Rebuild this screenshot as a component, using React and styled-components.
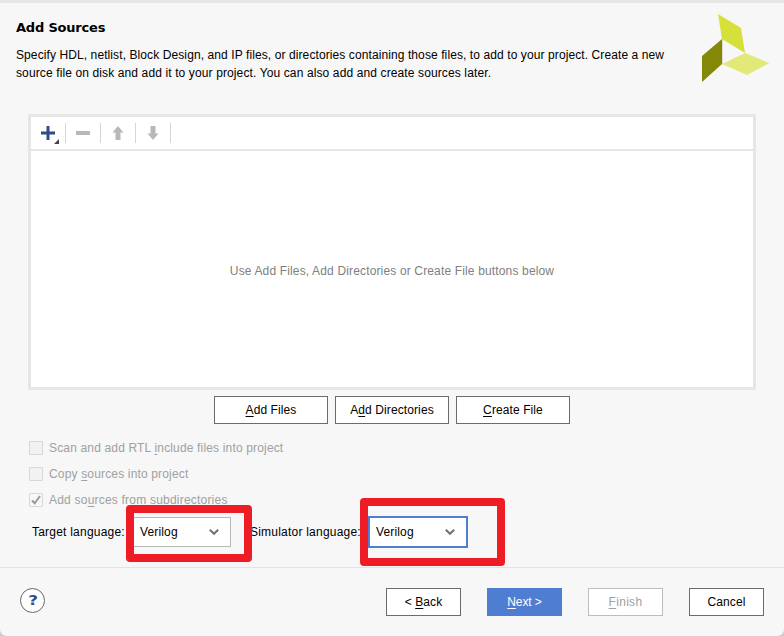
import React from "react";
import styled, { createGlobalStyle } from "styled-components";

const Global = createGlobalStyle`
  * { box-sizing: border-box; }
  body { margin: 0; background: #cfcfcf; overflow: hidden; }
`;

const Dialog = styled.main`
  display: flex;
  flex-direction: column;
  width: 784px;
  height: 636px;
  background: #f7f7f7;
  border-top: 3px solid #e6e6e6;
  border-radius: 0 0 7px 7px;
  color: #000;
  font: 12px/18px "Liberation Sans", Arial, sans-serif;
  letter-spacing: 0.12px;
  white-space: nowrap;
`;

const Header = styled.header`
  display: flex;
  justify-content: space-between;
  height: 111px;
  padding: 11px 14px 0 16px;
`;

const Title = styled.h1`
  margin: 5px 0 9px;
  font: bold 13px/18px "DejaVu Sans", sans-serif;
  letter-spacing: -0.2px;
`;

const Description = styled.p`
  margin: 0;
  letter-spacing: ${(p) => p.$spacing || "0.12px"};
`;

const Logo = styled.svg`
  display: block;
  width: 70px;
  height: 70px;
`;

const SourcePanel = styled.section`
  display: flex;
  flex-direction: column;
  width: 728px;
  height: 276px;
  margin-left: 28px;
  border: 3px solid #e6e6e6;
  background: #fff;
`;

const Toolbar = styled.div`
  display: flex;
  align-items: center;
  height: 34px;
  flex: none;
  border-bottom: 2px solid #e6e6e6;
`;

const ToolButton = styled.button`
  display: flex;
  width: 35px;
  height: 20px;
  padding: 0;
  border: 0;
  border-right: 1px solid #d6d6d6;
  background: transparent;

  svg { display: block; width: 34px; height: 20px; overflow: visible; }
`;

const EmptyMessage = styled.div`
  display: flex;
  flex: 1;
  align-items: center;
  justify-content: center;
  padding-top: 3px;
  color: #808080;
  letter-spacing: 0.15px;
`;

const SourceActions = styled.div`
  display: flex;
  justify-content: center;
  gap: 7px;
  margin-top: 6px;
`;

const Button = styled.button`
  width: ${(p) => p.$width || 75}px;
  height: 28px;
  padding: 0 0 1px;
  border: 1px solid ${(p) => (p.$primary ? "#4f7dd1" : p.disabled ? "#bdbdbd" : "#6b6b6b")};
  background: ${(p) => (p.$primary ? "#4f7dd1" : "#fff")};
  color: ${(p) => (p.$primary ? "#fff" : p.disabled ? "#a0a0a0" : "#000")};
  font: inherit;
  letter-spacing: ${(p) => p.$spacing || "0.1px"};
`;

const Key = styled.span`
  text-decoration: underline;
  text-decoration-thickness: 1px;
  text-underline-offset: 2px;
  text-decoration-skip-ink: none;
`;

const Options = styled.div`
  display: flex;
  flex-direction: column;
  gap: 8px;
  margin: 15px 0 0 29px;
`;

const Option = styled.label`
  display: flex;
  align-items: center;
  gap: 6px;
  height: 18px;
  color: #a0a0a0;
  letter-spacing: ${(p) => p.$spacing || "0.16px"};
`;

const CheckBox = styled.span`
  display: flex;
  width: 14px;
  height: 14px;
  border: 1px solid #d8d8d8;
  border-radius: 1px;
  background: ${(p) => (p.$checked ? "#f7f7f7" : "#f2f2f2")};

  svg { display: block; width: 12px; height: 12px; }
`;

const Languages = styled.div`
  position: relative;
  display: flex;
  align-items: center;
  height: 32px;
  margin-top: 7px;
  padding-left: 32px;
`;

const Label = styled.span`
  width: ${(p) => p.$width}px;
  letter-spacing: 0.22px;
`;

const Select = styled.div`
  display: flex;
  align-items: center;
  justify-content: space-between;
  width: 100px;
  height: ${(p) => (p.$focused ? 32 : 30)}px;
  margin-right: ${(p) => (p.$focused ? 0 : 19)}px;
  padding: 0 ${(p) => (p.$focused ? "11px 0 6px" : "11px 0 8px")};
  border: ${(p) => (p.$focused ? "2px solid #4f7dd1" : "1px solid #b8b8b8")};
  background: #fff;
  letter-spacing: 0.15px;

  svg { display: block; width: 10px; height: 6px; }
`;

const Highlight = styled.div`
  position: absolute;
  left: ${(p) => p.$left}px;
  top: ${(p) => p.$top}px;
  width: ${(p) => p.$width}px;
  height: ${(p) => p.$height}px;
  border: 8px solid #ee1c25;
  border-radius: 4px;
  pointer-events: none;
`;

const Footer = styled.footer`
  display: flex;
  justify-content: space-between;
  margin-top: 19px;
  padding: 20px 20px 0;
  border-top: 1px solid #e3e3e3;
`;

const Help = styled.button`
  width: 25px;
  height: 25px;
  padding: 0 0 0 1px;
  border: 1px solid #666;
  border-radius: 50%;
  background: #fff;
  color: #324c91;
  font: bold 14px/23px "DejaVu Sans", sans-serif;

  span { display: block; transform: scaleX(1.2); }
`;

const WizardButtons = styled.div`
  display: flex;
  gap: 26px;
`;

const Chevron = () => (
  <svg viewBox="0 0 10 6"><path d="M.8 .8 5 4.8 9.2 .8" fill="none" stroke="#707070" strokeWidth="2" /></svg>
);

export default function App() {
  return (
    <Dialog>
      <Global />
      <Header>
        <div>
          <Title>Add Sources</Title>
          <Description $spacing="0.096px">Specify HDL, netlist, Block Design, and IP files, or directories containing those files, to add to your project. Create a new</Description>
          <Description>source file on disk and add it to your project. You can also add and create sources later.</Description>
        </div>
        <Logo viewBox="0 0 70 70">
          <path d="M18 0 41 14 45 39 22 25Z" fill="#d5e03b" />
          <path d="M2 42 22 25V50L2 68Z" fill="#838806" />
          <path d="M22 50 45 39 69.5 49 47 61Z" fill="#e3e979" />
          <path d="M22.5 25V50" stroke="#deded0" />
        </Logo>
      </Header>
      <SourcePanel>
        <Toolbar>
          <ToolButton aria-label="Add">
            <svg viewBox="0 0 34 20">
              <path d="M10 10H24M17 3V17" stroke="#324c8b" strokeWidth="3" />
              <path d="M28 16V21H23Z" fill="#444" />
            </svg>
          </ToolButton>
          <ToolButton aria-label="Remove">
            <svg viewBox="0 0 34 20"><path d="M10 8H24V12H10Z" fill="#b8b8b8" /></svg>
          </ToolButton>
          <ToolButton aria-label="Move up">
            <svg viewBox="0 0 34 20"><path d="M17 3 22.5 9.5H19.5V17H14.5V9.5H11.5Z" fill="#b8b8b8" /></svg>
          </ToolButton>
          <ToolButton aria-label="Move down">
            <svg viewBox="0 0 34 20"><path d="M17 17 22.5 10.5H19.5V3H14.5V10.5H11.5Z" fill="#b8b8b8" /></svg>
          </ToolButton>
        </Toolbar>
        <EmptyMessage>Use Add Files, Add Directories or Create File buttons below</EmptyMessage>
      </SourcePanel>
      <SourceActions>
        <Button $width={114}><Key>A</Key>dd Files</Button>
        <Button $width={114}>A<Key>d</Key>d Directories</Button>
        <Button $width={114}><Key>C</Key>reate File</Button>
      </SourceActions>
      <Options>
        <Option><CheckBox /><span>Scan and add RTL <Key>i</Key>nclude files into project</span></Option>
        <Option><CheckBox /><span>Copy <Key>s</Key>ources into project</span></Option>
        <Option $spacing="0.21px">
          <CheckBox $checked><svg viewBox="0 0 12 12"><path d="M2 6.5 4.7 9.3 10 2" fill="none" stroke="#999" strokeWidth="2" /></svg></CheckBox>
          <span>Add so<Key>u</Key>rces from subdirectories</span>
        </Option>
      </Options>
      <Languages>
        <Label $width={99}>Target language:</Label>
        <Select>Verilog<Chevron /></Select>
        <Label $width={118}>Simulator language:</Label>
        <Select $focused>Verilog<Chevron /></Select>
        <Highlight $left={126} $top={-11} $width={126} $height={57} />
        <Highlight $left={360} $top={-18} $width={145} $height={68} />
      </Languages>
      <Footer>
        <Help aria-label="Help"><span>?</span></Help>
        <WizardButtons>
          <Button>&lt; <Key>B</Key>ack</Button>
          <Button $primary $spacing="-0.1px"><Key>N</Key>ext &gt;</Button>
          <Button disabled $spacing="0.3px"><Key>F</Key>inish</Button>
          <Button>Cancel</Button>
        </WizardButtons>
      </Footer>
    </Dialog>
  );
}
